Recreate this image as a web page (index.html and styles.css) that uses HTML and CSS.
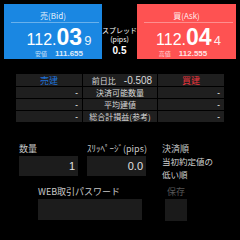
FILE: index.html
```html
<!DOCTYPE html>
<html lang="ja">
<head>
<meta charset="utf-8">
<link rel="stylesheet" href="styles.css">
</head>
<body>
<div class="app">
  <div class="quotes">
    <div class="quote bid">
      <div class="q-title">売(Bid)</div>
      <div class="q-line"></div>
      <div class="price"><span class="p-main">112.</span><span class="p-big">03</span><span class="p-sub">9</span></div>
      <div class="hl"><span class="hl-label">安値</span><span class="hl-val">111.655</span></div>
    </div>
    <div class="spread">
      <div class="sp-label">スプレッド</div>
      <div class="sp-label">(pips)</div>
      <div class="sp-val">0.5</div>
    </div>
    <div class="quote ask">
      <div class="q-title">買(Ask)</div>
      <div class="q-line"></div>
      <div class="price"><span class="p-main">112.</span><span class="p-big">04</span><span class="p-sub">4</span></div>
      <div class="hl"><span class="hl-label">高値</span><span class="hl-val">112.555</span></div>
    </div>
  </div>

  <div class="pos-table">
    <div class="cell head sell">売建</div>
    <div class="cell mid first">前日比<span class="chg">-0.508</span></div>
    <div class="cell head buy">買建</div>

    <div class="cell num">-</div>
    <div class="cell mid">決済可能数量</div>
    <div class="cell num">-</div>

    <div class="cell num">-</div>
    <div class="cell mid">平均建値</div>
    <div class="cell num">-</div>

    <div class="cell num">-</div>
    <div class="cell mid">総合計損益(参考)</div>
    <div class="cell num">-</div>
  </div>

  <div class="order-row">
    <div class="field qty">
      <div class="f-label">数量</div>
      <div class="f-box">1</div>
    </div>
    <div class="field slip">
      <div class="f-label">ｽﾘｯﾍﾟｰｼﾞ(pips)</div>
      <div class="f-box">0.0</div>
    </div>
    <div class="field order">
      <div class="f-label">決済順</div>
      <div class="f-text">
        <div class="f-line">当初約定値の</div>
        <div class="f-line">低い順</div>
      </div>
    </div>
  </div>

  <div class="pass-row">
    <div class="field pass">
      <div class="f-label">WEB取引パスワード</div>
      <div class="p-box"></div>
    </div>
    <div class="field save">
      <div class="f-label dim">保存</div>
      <div class="s-box"></div>
    </div>
  </div>

  <div class="buttons">
    <div class="btn b-blue"></div>
    <div class="btn b-orange"></div>
    <div class="btn b-red"></div>
  </div>
</div>
</body>
</html>
```

FILE: styles.css
```css
html, body {
  margin: 0;
  padding: 0;
  background: #000;
}
body {
  width: 240px;
  height: 240px;
  overflow: hidden;
  font-family: "Liberation Sans", "Noto Sans CJK JP", sans-serif;
  color: #ddd;
}
.app {
  display: flex;
  flex-direction: column;
}
.quotes {
  display: flex;
  align-items: flex-start;
  padding: 4px 4px 0 4px;
}
.quote {
  width: 98px;
  height: 55px;
  display: flex;
  flex-direction: column;
  align-items: center;
  color: #fff;
}
.quote.ask {
  width: 99px;
}
.bid { background: #1a87e2; }
.ask { background: #fe5252; }
.q-title {
  margin-top: 6px;
  font-size: 8px;
  line-height: 11px;
  font-family: "Noto Sans CJK JP", sans-serif;
  color: rgba(255,255,255,0.92);
}
.q-line {
  align-self: stretch;
  height: 1px;
  margin: 1px 3px 0 7px;
  background: rgba(255,255,255,0.35);
}
.price {
  display: flex;
  align-items: baseline;
  line-height: 20px;
  height: 20px;
  margin-top: 4px;
}
.bid .price { padding-left: 12px; }
.ask .price { padding-left: 4px; }
.p-main {
  font-size: 16px;
}
.p-big {
  font-size: 23px;
  font-weight: bold;
}
.p-sub {
  font-size: 13px;
  margin-left: 2px;
  font-weight: 300;
  color: rgba(255,255,255,0.9);
}
.hl {
  display: flex;
  align-items: center;
  gap: 8px;
  line-height: 9px;
  height: 9px;
  margin-top: 2px;
}
.bid .hl { padding-left: 12px; }
.ask .hl { padding-right: 7px; }
.hl-label {
  font-family: "Noto Sans CJK JP", sans-serif;
  font-size: 6px;
  color: rgba(255,255,255,0.75);
}
.hl-val {
  font-size: 8px;
  font-weight: bold;
  color: rgba(255,255,255,0.85);
}
.spread {
  width: 35px;
  margin-top: 20px;
  height: 33px;
  display: flex;
  flex-direction: column;
  align-items: center;
  padding-top: 2px;
  box-sizing: border-box;
  background: #000;
  color: #fff;
}
.sp-label {
  font-family: "Noto Sans CJK JP", sans-serif;
  font-size: 7px;
  line-height: 9px;
}
.sp-val {
  font-size: 10px;
  font-weight: bold;
  line-height: 13px;
}
.pos-table {
  margin: 15px 16px 0 16px;
  display: grid;
  grid-template-columns: 66px 74px 66px;
  grid-template-rows: 12px 11px 11px 11px;
  gap: 1px;
}
.cell {
  background: #1f1f1f;
  font-family: "Noto Sans CJK JP", sans-serif;
  font-size: 8px;
  display: flex;
  align-items: center;
  color: #d8d8d8;
}
.cell.head {
  justify-content: center;
  font-size: 9px;
}
.sell { color: #1e6fd6; }
.buy { color: #e8343c; }
.cell.mid {
  justify-content: center;
}
.cell.first {
  padding-left: 4px;
}
.chg {
  font-family: "Liberation Sans", sans-serif;
  font-size: 10px;
  margin-left: 8px;
}
.cell.num {
  justify-content: flex-end;
  padding-right: 4px;
  font-family: "Liberation Sans", sans-serif;
  font-weight: bold;
}
.order-row {
  display: flex;
  margin-top: 21px;
  padding-left: 19px;
}
.field {
  display: flex;
  flex-direction: column;
}
.f-label {
  font-family: "Noto Sans CJK JP", sans-serif;
  font-size: 9px;
  line-height: 11px;
  color: #c8c8c8;
  margin-bottom: 2px;
  white-space: nowrap;
}
.f-label.dim {
  color: #555;
  text-align: center;
}
.qty, .slip {
  width: 59px;
}
.slip {
  margin-left: 9px;
}
.order {
  margin-left: 16px;
}
.f-box {
  height: 20px;
  background: #1c1c1c;
  display: flex;
  align-items: center;
  justify-content: flex-end;
  padding-right: 3px;
  font-size: 11px;
  color: #e0e0e0;
}
.f-text {
  font-family: "Noto Sans CJK JP", sans-serif;
  font-size: 8.5px;
  color: #d0d0d0;
  margin-top: -1px;
}
.f-line {
  height: 12.5px;
  line-height: 12.5px;
  white-space: nowrap;
}
.pass-row {
  display: flex;
  margin-top: 6px;
  padding-left: 38px;
}
.pass {
  width: 104px;
}
.p-box {
  height: 21px;
  background: #1c1c1c;
}
.save {
  width: 22px;
  margin-left: 23px;
}
.s-box {
  height: 22px;
  background: #1a1a1a;
}
.buttons {
  display: flex;
  gap: 10px;
  margin-top: 19px;
  padding-left: 5px;
}
.btn {
  width: 70px;
  height: 2px;
}
.b-blue { background: #1585dc; }
.b-orange { background: #ff8200; }
.b-red { background: #f25252; }
```
